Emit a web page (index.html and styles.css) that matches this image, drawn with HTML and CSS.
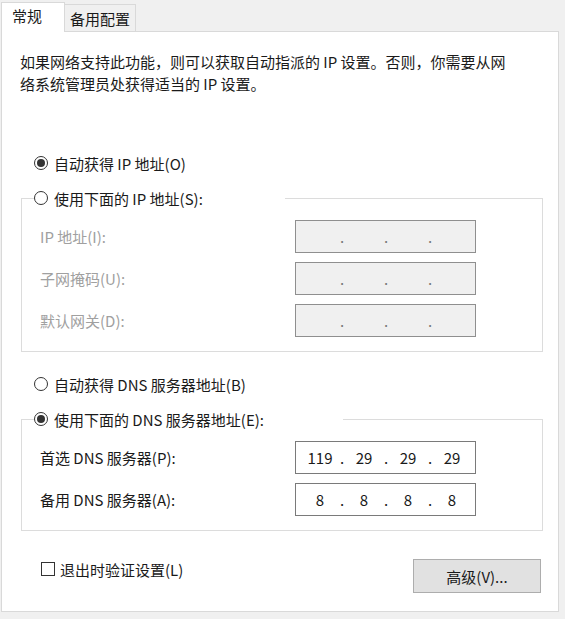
FILE: index.html
```html
<!DOCTYPE html>
<html lang="zh-CN">
<head>
    <meta charset="UTF-8">
    <title>Internet 协议版本 4 (TCP/IPv4) 属性</title>
    <link rel="stylesheet" href="styles.css">
</head>
<body>
    <div class="dialog">
        <!-- Tabs -->
        <div class="tabs">
            <div class="tab tab-active">常规</div>
            <div class="tab">备用配置</div>
        </div>

        <div class="panel">
            <p class="intro">如果网络支持此功能，则可以获取自动指派的 IP 设置。否则，你需要从网<br>络系统管理员处获得适当的 IP 设置。</p>

            <div class="option option-first"><span class="radio checked"></span>自动获得 IP 地址(O)</div>

            <fieldset class="group">
                <legend class="legend legend-ip"><span class="radio"></span>使用下面的 IP 地址(S):</legend>
                <div class="fields">
                    <span class="field-label off">IP 地址(I):</span>
                    <div class="ip-box off"><span class="octet"></span><span class="dot">.</span><span class="octet"></span><span class="dot">.</span><span class="octet"></span><span class="dot">.</span><span class="octet"></span></div>
                    <span class="field-label off">子网掩码(U):</span>
                    <div class="ip-box off"><span class="octet"></span><span class="dot">.</span><span class="octet"></span><span class="dot">.</span><span class="octet"></span><span class="dot">.</span><span class="octet"></span></div>
                    <span class="field-label off">默认网关(D):</span>
                    <div class="ip-box off"><span class="octet"></span><span class="dot">.</span><span class="octet"></span><span class="dot">.</span><span class="octet"></span><span class="dot">.</span><span class="octet"></span></div>
                </div>
            </fieldset>

            <div class="option option-dns"><span class="radio"></span>自动获得 DNS 服务器地址(B)</div>

            <fieldset class="group">
                <legend class="legend legend-dns"><span class="radio checked"></span>使用下面的 DNS 服务器地址(E):</legend>
                <div class="fields">
                    <span class="field-label">首选 DNS 服务器(P):</span>
                    <div class="ip-box"><span class="octet">119</span><span class="dot">.</span><span class="octet">29</span><span class="dot">.</span><span class="octet">29</span><span class="dot">.</span><span class="octet">29</span></div>
                    <span class="field-label">备用 DNS 服务器(A):</span>
                    <div class="ip-box"><span class="octet">8</span><span class="dot">.</span><span class="octet">8</span><span class="dot">.</span><span class="octet">8</span><span class="dot">.</span><span class="octet">8</span></div>
                </div>
            </fieldset>

            <div class="footer">
                <div class="check-line"><span class="checkbox"></span>退出时验证设置(L)</div>
                <button class="adv-btn">高级(V)...</button>
            </div>
        </div>
    </div>
</body>
</html>
```

FILE: styles.css
```css
body {
    margin: 0;
    background: #f0f0f0;
    font-family: "Noto Sans CJK SC", sans-serif;
    font-size: 15px;
    color: #1a1a1a;
}
.dialog {
    width: 558px;
    margin-left: 1px;
}

/* tabs */
.tabs {
    display: flex;
    align-items: flex-end;
    height: 31px;
}
.tab {
    box-sizing: border-box;
    height: 27px;
    width: 71px;
    padding: 2px 0 0 5px;
    line-height: 24px;
    border: 1px solid #d9d9d9;
    border-left: none;
    border-bottom: none;
    background: #f0f0f0;
}
.tab-active {
    position: relative;
    z-index: 1;
    width: 64px;
    height: 30px;
    margin-bottom: -1px;
    padding: 0 0 0 10px;
    line-height: 26px;
    border-left: 1px solid #d9d9d9;
    background: #fff;
}

/* main panel */
.panel {
    box-sizing: border-box;
    width: 558px;
    padding: 19px 0 18px 18px;
    border: 1px solid #d9d9d9;
    background: #fff;
}
.intro {
    margin: 0;
    line-height: 22px;
}

/* radios */
.option {
    display: flex;
    align-items: center;
    height: 22px;
    padding-left: 14px;
}
.option-first {
    margin-top: 57px;
}
.option-dns {
    margin-top: 21px;
}
.radio {
    box-sizing: border-box;
    display: flex;
    align-items: center;
    justify-content: center;
    width: 14px;
    height: 14px;
    margin-right: 6px;
    border: 1px solid #333;
    border-radius: 50%;
    background: #fff;
}
.radio.checked::after {
    content: "";
    width: 8px;
    height: 8px;
    border-radius: 50%;
    background: #333;
}

/* group boxes */
.group {
    box-sizing: border-box;
    width: 522px;
    min-width: 0;
    margin: 13px 0 0 1px;
    padding: 11px 0 14px 0;
    border: 1px solid #dcdcdc;
}
.legend {
    display: flex;
    align-items: center;
    box-sizing: border-box;
    height: 22px;
    margin-left: 12px;
    padding: 0;
    background: #fff;
}
.legend-ip {
    width: 251px;
}
.legend-dns {
    width: 309px;
}
.fields {
    display: grid;
    grid-template-columns: 255px 181px;
    row-gap: 9px;
    align-items: center;
    padding-left: 18px;
}
.field-label.off {
    color: #a0a0a0;
}
.ip-box {
    box-sizing: border-box;
    display: flex;
    align-items: center;
    height: 33px;
    padding-left: 6px;
    border: 1px solid #7a7a7a;
    background: #fff;
    color: #1a1a1a;
}
.ip-box.off {
    border-color: #8f8f8f;
    background: #f0f0f0;
    color: #777;
}
.octet {
    width: 36px;
    text-align: center;
}
.dot {
    width: 8px;
    text-align: center;
}

/* bottom row */
.footer {
    display: flex;
    justify-content: space-between;
    align-items: flex-start;
    width: 500px;
    margin: 27px 0 0 21px;
}
.check-line {
    display: flex;
    align-items: center;
    height: 22px;
}
.checkbox {
    box-sizing: border-box;
    width: 14px;
    height: 14px;
    margin-right: 5px;
    border: 1px solid #333;
    background: #fff;
}
.adv-btn {
    width: 128px;
    height: 34px;
    margin-top: 1px;
    border: 1px solid #adadad;
    background: #e1e1e1;
    font-family: inherit;
    font-size: 15px;
    color: #1a1a1a;
}
```
